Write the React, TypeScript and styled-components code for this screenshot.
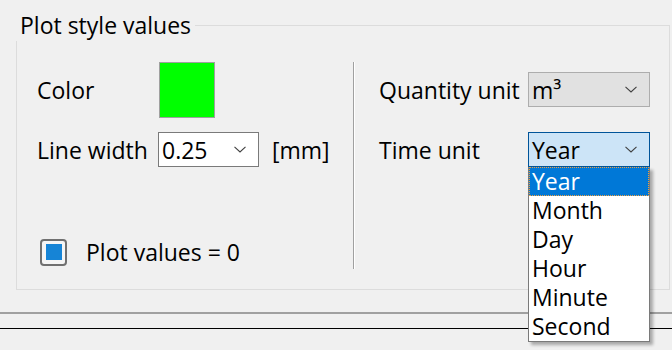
import React from 'react';
import styled, { createGlobalStyle } from 'styled-components';

const GlobalStyle = createGlobalStyle`
  html, body {
    margin: 0;
    padding: 0;
    background: #f0f0f0;
  }
  body {
    font-family: "Open Sans", "Noto Sans", "Liberation Sans", sans-serif;
    font-size: 23px;
    color: #000;
  }
`;

const Page = styled.div`
  position: relative;
  width: 672px;
  height: 350px;
  overflow: hidden;
  background: #f0f0f0;
`;

// Windows-style group box with title sitting on the top border
const GroupBox = styled.div`
  position: relative;
  box-sizing: border-box;
  margin: 25px 0 0 16px;
  width: 654px;
  height: 265px;
  border: 1px solid #dcdcdc;
  padding: 36px 0 0 20px;
  display: flex;
`;

const GroupTitle = styled.div`
  position: absolute;
  left: -1px;
  top: -26px;
  box-sizing: border-box;
  height: 41px;
  padding: 10px 4px 0 4px;
  background: #f0f0f0;
  line-height: 30px;
  white-space: nowrap;
`;

const LeftColumn = styled.div`
  width: 316px;
  display: flex;
  flex-direction: column;
`;

const Separator = styled.div`
  width: 1px;
  height: 207px;
  background: #a0a0a0;
  border-right: 1px solid #ffffff;
`;

const RightColumn = styled.div`
  padding: 10px 0 0 24px;
  display: flex;
  flex-direction: column;
  gap: 25px;
`;

const Row = styled.div<{ $labelWidth: number; $height: number }>`
  display: grid;
  grid-template-columns: ${(p) => p.$labelWidth}px auto auto;
  justify-content: start;
  align-items: center;
  height: ${(p) => p.$height}px;
`;

const Label = styled.span`
  white-space: nowrap;
`;

const Swatch = styled.div`
  box-sizing: border-box;
  width: 56px;
  height: 56px;
  margin-left: 1px;
  background: #00ff00;
  border: 1px solid #a0a0a0;
`;

const Combo = styled.div<{ $width: number; $variant?: 'white' | 'gray' | 'focus' }>`
  position: relative;
  box-sizing: border-box;
  width: ${(p) => p.$width}px;
  height: 35px;
  padding: 0 0 0 3px;
  display: flex;
  align-items: center;
  justify-content: space-between;
  background: ${(p) =>
    p.$variant === 'gray' ? '#e1e1e1' : p.$variant === 'focus' ? '#cce4f7' : '#ffffff'};
  border: 1px solid
    ${(p) => (p.$variant === 'gray' ? '#adadad' : p.$variant === 'focus' ? '#005499' : '#7a7a7a')};
`;

const Chevron = styled.svg`
  width: 12px;
  height: 7px;
  margin-right: 12px;
  flex: none;
`;

const Unit = styled.span`
  margin-left: 13px;
`;

const CheckRow = styled.label`
  display: flex;
  align-items: center;
  gap: 19px;
  margin: 69px 0 0 3px;
`;

const CheckBox = styled.span`
  box-sizing: border-box;
  width: 27px;
  height: 27px;
  border: 2px solid #707070;
  border-radius: 4px;
  display: flex;
  align-items: center;
  justify-content: center;
  background: #f5f5f5;

  &::after {
    content: '';
    width: 16px;
    height: 16px;
    background: #1684d6;
  }
`;

const DropList = styled.ul`
  position: absolute;
  left: -1px;
  top: 34px;
  z-index: 5;
  box-sizing: border-box;
  width: 122px;
  margin: 0;
  padding: 0;
  list-style: none;
  background: #ffffff;
  border: 1px solid #7a7a7a;
  border-top: none;
  box-shadow: 3px 3px 3px rgba(0, 0, 0, 0.3);
`;

const DropItem = styled.li<{ $selected?: boolean }>`
  box-sizing: border-box;
  height: 29px;
  line-height: 27px;
  padding-left: 2px;
  background: ${(p) => (p.$selected ? '#0078d7' : 'transparent')};
  color: ${(p) => (p.$selected ? '#ffffff' : '#000000')};
  border: 1px dotted ${(p) => (p.$selected ? '#f0a040' : 'transparent')};
`;

const GrayRule = styled.div`
  margin-top: 22px;
  height: 2px;
  background: #a0a0a0;
`;

const BlackRule = styled.div`
  margin-top: 14px;
  height: 1px;
  background: #000000;
`;

const ChevronIcon = () => (
  <Chevron viewBox="0 0 12 7">
    <path d="M0.5 0.8 L6 6 L11.5 0.8" fill="none" stroke="#404040" strokeWidth="1.1" />
  </Chevron>
);

const timeUnits = ['Year', 'Month', 'Day', 'Hour', 'Minute', 'Second'];

export default function App() {
  return (
    <Page>
      <GlobalStyle />
      <GroupBox>
        <GroupTitle>Plot style values</GroupTitle>

        <LeftColumn>
          <Row $labelWidth={121} $height={56}>
            <Label>Color</Label>
            <Swatch />
          </Row>
          <Row $labelWidth={121} $height={35} style={{ marginTop: 14 }}>
            <Label>Line width</Label>
            <Combo $width={101}>
              <span>0.25</span>
              <ChevronIcon />
            </Combo>
            <Unit>[mm]</Unit>
          </Row>
          <CheckRow>
            <CheckBox />
            <span>Plot values = 0</span>
          </CheckRow>
        </LeftColumn>

        <Separator />

        <RightColumn>
          <Row $labelWidth={149} $height={35}>
            <Label>Quantity unit</Label>
            <Combo $width={122} $variant="gray">
              <span>m³</span>
              <ChevronIcon />
            </Combo>
          </Row>
          <Row $labelWidth={149} $height={35}>
            <Label>Time unit</Label>
            <Combo $width={122} $variant="focus">
              <span>Year</span>
              <ChevronIcon />
              <DropList>
                {timeUnits.map((u, i) => (
                  <DropItem key={u} $selected={i === 0}>
                    {u}
                  </DropItem>
                ))}
              </DropList>
            </Combo>
          </Row>
        </RightColumn>
      </GroupBox>
      <GrayRule />
      <BlackRule />
    </Page>
  );
}
